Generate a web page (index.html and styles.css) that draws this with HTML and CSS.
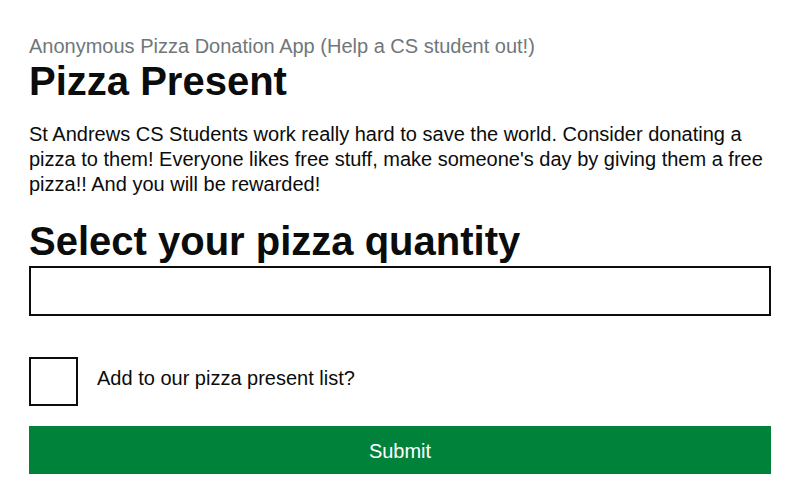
FILE: index.html
```html
<!DOCTYPE html>
<html lang="en">
<head>
<meta charset="utf-8">
<title>Pizza Present</title>
<link rel="stylesheet" href="styles.css">
</head>
<body>
<main class="page">
  <span class="caption">Anonymous Pizza Donation App (Help a CS student out!)</span>
  <h1 class="title">Pizza Present</h1>
  <p class="body">St Andrews CS Students work really hard to save the world. Consider donating a pizza to them! Everyone likes free stuff, make someone's day by giving them a free pizza!! And you will be rewarded!</p>
  <form class="form">
    <label class="label" for="qty">Select your pizza quantity</label>
    <input class="input" id="qty" type="text">
    <div class="check-row">
      <input class="checkbox" id="list" type="checkbox">
      <label class="check-label" for="list">Add to our pizza present list?</label>
    </div>
    <button class="button" type="button">Submit</button>
  </form>
</main>
</body>
</html>
```
FILE: styles.css
```css
* { box-sizing: border-box; }
html, body { margin: 0; padding: 0; background: #ffffff; }
body {
  font-family: "Liberation Sans", Arial, sans-serif;
  color: #0b0c0c;
}
.page {
  padding: 34px 29px 0 29px;
  display: flex;
  flex-direction: column;
}
.caption {
  display: block;
  font-size: 20px;
  line-height: 25px;
  color: #6f777b;
}
.title {
  margin: 0;
  font-size: 40px;
  line-height: 44px;
  font-weight: 700;
}
.body {
  margin: 19px 0 0 0;
  font-size: 20px;
  line-height: 25px;
}
.form {
  display: flex;
  flex-direction: column;
  margin-top: 22px;
}
.label {
  font-size: 40px;
  line-height: 44px;
  font-weight: 700;
  margin-bottom: 3px;
}
.input {
  display: block;
  width: 100%;
  height: 50px;
  margin: 0;
  border: 2px solid #0b0c0c;
  border-radius: 0;
  background: #fff;
  font: inherit;
  font-size: 20px;
  padding: 5px;
}
.check-row {
  display: flex;
  align-items: center;
  margin-top: 41px;
}
.checkbox {
  -webkit-appearance: none;
  appearance: none;
  width: 49px;
  height: 49px;
  margin: 0;
  border: 2px solid #0b0c0c;
  border-radius: 0;
  background: #fff;
  flex: none;
}
.check-label {
  font-size: 20px;
  line-height: 25px;
  margin-left: 19px;
  margin-bottom: 7px;
}
.button {
  margin-top: 20px;
  width: 100%;
  height: 48px;
  border: 0;
  border-radius: 0;
  background: #00823b;
  box-shadow: 0 2px 0 #002d18;
  color: #ffffff;
  font-family: "Liberation Sans", Arial, sans-serif;
  font-size: 20px;
  line-height: 25px;
  padding: 2px 0 0 0;
}
```
